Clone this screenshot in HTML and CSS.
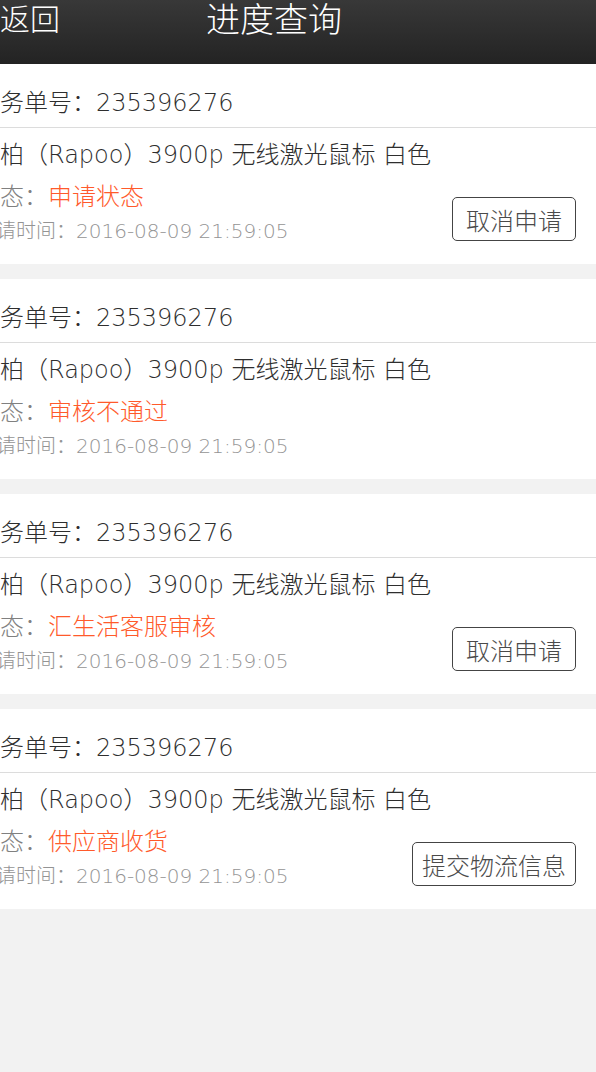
FILE: index.html
```html
<!DOCTYPE html>
<html lang="zh-CN">
<head>
<meta charset="utf-8">
<title>进度查询</title>
<link rel="stylesheet" href="styles.css">
</head>
<body>
<header class="topbar">
  <div class="topbar-inner">
    <a class="back">返回</a>
    <h1 class="title">进度查询</h1>
    <span class="spacer"></span>
  </div>
</header>
<main class="list">
  <section class="card">
    <div class="card-no"><p class="shift">服务单号：235396276</p></div>
    <div class="card-body">
      <p class="product shift">雷柏（Rapoo）3900p 无线激光鼠标 白色</p>
      <div class="card-row">
        <div class="meta shift">
          <p class="status">状态：<span class="status-val">申请状态</span></p>
          <p class="time">申请时间：<span class="time-val">2016-08-09 21:59:05</span></p>
        </div>
        <button class="btn">取消申请</button>
      </div>
    </div>
  </section>
  <section class="card">
    <div class="card-no"><p class="shift">服务单号：235396276</p></div>
    <div class="card-body">
      <p class="product shift">雷柏（Rapoo）3900p 无线激光鼠标 白色</p>
      <div class="card-row">
        <div class="meta shift">
          <p class="status">状态：<span class="status-val">审核不通过</span></p>
          <p class="time">申请时间：<span class="time-val">2016-08-09 21:59:05</span></p>
        </div>
      </div>
    </div>
  </section>
  <section class="card">
    <div class="card-no"><p class="shift">服务单号：235396276</p></div>
    <div class="card-body">
      <p class="product shift">雷柏（Rapoo）3900p 无线激光鼠标 白色</p>
      <div class="card-row">
        <div class="meta shift">
          <p class="status">状态：<span class="status-val">汇生活客服审核</span></p>
          <p class="time">申请时间：<span class="time-val">2016-08-09 21:59:05</span></p>
        </div>
        <button class="btn">取消申请</button>
      </div>
    </div>
  </section>
  <section class="card">
    <div class="card-no"><p class="shift">服务单号：235396276</p></div>
    <div class="card-body">
      <p class="product shift">雷柏（Rapoo）3900p 无线激光鼠标 白色</p>
      <div class="card-row">
        <div class="meta shift">
          <p class="status">状态：<span class="status-val">供应商收货</span></p>
          <p class="time">申请时间：<span class="time-val">2016-08-09 21:59:05</span></p>
        </div>
        <button class="btn">提交物流信息</button>
      </div>
    </div>
  </section>
</main>
</body>
</html>
```

FILE: styles.css
```css
html, body {
  margin: 0;
  padding: 0;
}
body {
  background: #f2f2f2;
  font-family: "DejaVu Sans", "Noto Sans CJK SC", sans-serif;
  font-weight: 300;
  color: #2e2e2e;
  overflow-x: hidden;
}
p {
  margin: 0;
}
.topbar {
  height: 64px;
  background: linear-gradient(#383838, #232323);
  color: #fff;
}
.topbar-inner {
  display: grid;
  grid-template-columns: 1fr auto 1fr;
  align-items: start;
  width: 596px;
  margin-left: -24px;
}
.back {
  padding-left: 24px;
  font-size: 30px;
  line-height: 40px;
  color: #fff;
}
.title {
  margin: 0;
  font-size: 34px;
  line-height: 40px;
  font-weight: 300;
}
.list {
  display: flex;
  flex-direction: column;
  gap: 15px;
}
.card {
  background: #fff;
  height: 200px;
}
.card-no {
  padding: 21px 0 6px;
  border-bottom: 1px solid #dcdcdc;
  font-size: 24px;
  line-height: 36px;
  white-space: nowrap;
}
.shift {
  margin-left: -24px;
}
.card-body {
  padding: 10px 20px 0 0;
}
.product {
  font-size: 24px;
  line-height: 34px;
  white-space: nowrap;
}
.card-row {
  display: flex;
  justify-content: space-between;
  align-items: flex-start;
  margin-top: 6px;
}
.status {
  font-size: 24px;
  line-height: 34px;
  padding-top: 2px;
  color: #808080;
  white-space: nowrap;
}
.status-val {
  color: #ff5a2b;
}
.time {
  margin-top: 2px;
  font-size: 20px;
  line-height: 30px;
  color: #949494;
  white-space: nowrap;
}
.btn {
  margin-top: 19px;
  box-sizing: border-box;
  min-width: 124px;
  height: 44px;
  padding: 0 9px;
  background: #fff;
  border: 1px solid #444;
  border-radius: 5px;
  font-family: "DejaVu Sans", "Noto Sans CJK SC", sans-serif;
  font-weight: 300;
  font-size: 24px;
  color: #4a4a4a;
  text-align: center;
}
```
